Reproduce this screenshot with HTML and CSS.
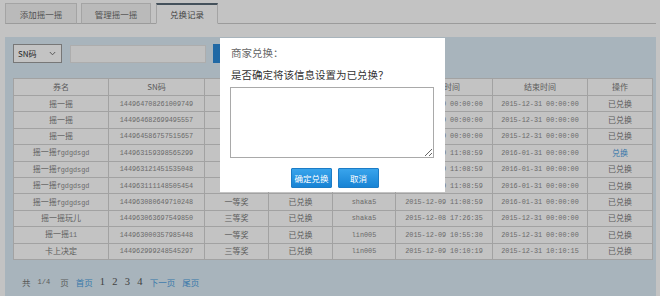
FILE: index.html
```html
<!DOCTYPE html>
<html lang="zh-CN">
<head>
<meta charset="utf-8">
<title>兑换记录</title>
<link rel="stylesheet" href="styles.css">
</head>
<body>
<div class="page">
  <ul class="tabs">
    <li class="tab tab-add">添加摇一摇</li>
    <li class="tab tab-manage">管理摇一摇</li>
    <li class="tab tab-record active">兑换记录</li>
  </ul>
  <div class="panel">
    <div class="toolbar">
      <div class="select"><span>SN码</span><svg class="chev" width="7" height="5" viewBox="0 0 7 5"><path d="M0.8 1 L3.5 3.8 L6.2 1" fill="none" stroke="#666" stroke-width="0.9"/></svg></div>
      <div class="input"></div>
      <button class="search" aria-label="查询"></button>
    </div>
    <table class="grid">
      <colgroup>
        <col style="width:95px"><col style="width:96px"><col style="width:64px"><col style="width:64px"><col style="width:63px"><col style="width:97px"><col style="width:95px"><col style="width:65px">
      </colgroup>
      <thead>
        <tr><th>券名</th><th>SN码</th><th></th><th></th><th></th><th>开始时间</th><th>结束时间</th><th>操作</th></tr>
      </thead>
      <tbody>
        <tr><td>摇一摇</td><td class="en">144964708261009749</td><td></td><td></td><td></td><td class="en">2015-12-09 00:00:00</td><td class="en">2015-12-31 00:00:00</td><td>已兑换</td></tr>
        <tr><td>摇一摇</td><td class="en">144964682699495557</td><td></td><td></td><td></td><td class="en">2015-12-09 00:00:00</td><td class="en">2015-12-31 00:00:00</td><td>已兑换</td></tr>
        <tr><td>摇一摇</td><td class="en">144964586757515657</td><td></td><td></td><td></td><td class="en">2015-12-09 00:00:00</td><td class="en">2015-12-31 00:00:00</td><td>已兑换</td></tr>
        <tr><td>摇一摇<span class="en">fgdgdsgd</span></td><td class="en">144963159398565299</td><td></td><td></td><td></td><td class="en">2015-12-09 11:08:59</td><td class="en">2016-01-31 00:00:00</td><td><span class="link">兑换</span></td></tr>
        <tr><td>摇一摇<span class="en">fgdgdsgd</span></td><td class="en">144963121451535048</td><td></td><td></td><td></td><td class="en">2015-12-09 11:08:59</td><td class="en">2016-01-31 00:00:00</td><td>已兑换</td></tr>
        <tr><td>摇一摇<span class="en">fgdgdsgd</span></td><td class="en">144963111148505454</td><td></td><td></td><td></td><td class="en">2015-12-09 11:08:59</td><td class="en">2016-01-31 00:00:00</td><td>已兑换</td></tr>
        <tr><td>摇一摇<span class="en">fgdgdsgd</span></td><td class="en">144963080649710248</td><td>一等奖</td><td>已兑换</td><td class="en">shaka5</td><td class="en">2015-12-09 11:08:59</td><td class="en">2016-01-31 00:00:00</td><td>已兑换</td></tr>
        <tr><td>摇一摇玩儿</td><td class="en">144963063697549850</td><td>三等奖</td><td>已兑换</td><td class="en">shaka5</td><td class="en">2015-12-08 17:26:35</td><td class="en">2015-12-31 00:00:00</td><td>已兑换</td></tr>
        <tr><td>摇一摇<span class="en">11</span></td><td class="en">144963000357985448</td><td>一等奖</td><td>已兑换</td><td class="en">lin005</td><td class="en">2015-12-09 10:55:30</td><td class="en">2015-12-31 00:00:00</td><td>已兑换</td></tr>
        <tr><td>卡上决定</td><td class="en">144962999248545297</td><td>三等奖</td><td>已兑换</td><td class="en">lin005</td><td class="en">2015-12-09 10:10:19</td><td class="en">2015-12-31 10:10:15</td><td>已兑换</td></tr>
      </tbody>
    </table>
    <div class="pager">
      <span>共</span><span class="en">1/4</span><span>页</span><span class="link">首页</span><span class="num">1</span><span class="num">2</span><span class="num">3</span><span class="num">4</span><span class="link">下一页</span><span class="link">尾页</span>
    </div>
  </div>
</div>
<div class="mask"></div>
<div class="dialog">
  <div class="dialog-title">商家兑换：</div>
  <div class="dialog-text">是否确定将该信息设置为已兑换？</div>
  <textarea class="dialog-note"></textarea>
  <div class="dialog-actions">
    <button class="btn">确定兑换</button>
    <button class="btn">取消</button>
  </div>
</div>
</body>
</html>
```
FILE: styles.css
```css
html, body {
  margin: 0;
  padding: 0;
}
body {
  width: 660px;
  height: 296px;
  overflow: hidden;
  background: #ffffff;
  font-family: "Noto Sans CJK SC", "Noto Sans", sans-serif;
  position: relative;
}
.page {
  box-sizing: border-box;
  height: 296px;
  padding: 3px 4px 0 5px;
  display: flex;
  flex-direction: column;
}
.tabs {
  list-style: none;
  margin: 0;
  padding: 0;
  display: flex;
  height: 20px;
  border-bottom: 1px solid #cbcbcb;
}
.tab {
  box-sizing: border-box;
  height: 21px;
  margin-bottom: -1px;
  border: 1px solid #d7d7d7;
  border-bottom-color: #cbcbcb;
  background: #f4f4f4;
  color: #6a6a6a;
  font-size: 8.5px;
  display: flex;
  align-items: center;
  justify-content: center;
}
.tab-add { width: 72px; }
.tab-manage { width: 70px; margin-left: 4px; }
.tab-record { width: 62px; margin-left: 5px; }
.tab.active {
  background: #ffffff;
  border-top: 2px solid #5a6b78;
  border-bottom-color: #ffffff;
  color: #5a5a5a;
}
.panel {
  flex: 1;
  margin-top: 13px;
  background: #dcecf6;
  padding: 7px 4px 0 8px;
}
.toolbar {
  display: flex;
  align-items: center;
  height: 19px;
}
.select {
  box-sizing: border-box;
  width: 49px;
  height: 19px;
  border: 1px solid #9c9c9c;
  background: #ffffff;
  display: flex;
  align-items: center;
  justify-content: space-between;
  padding: 0 5px 0 4px;
  font-size: 8px;
  color: #333;
}
.input {
  box-sizing: border-box;
  margin-left: 8px;
  width: 136px;
  height: 18px;
  border: 1px solid #e2e2e2;
  background: #fbfbfb;
}
.search {
  margin-left: 7px;
  width: 42px;
  height: 19px;
  border: 0;
  background: #2b8ad8;
}
.grid {
  margin-top: 15px;
  width: 639px;
  table-layout: fixed;
  border-collapse: collapse;
  background: #ffffff;
  color: #7a7a7a;
  font-size: 8px;
}
.grid th, .grid td {
  border: 1px solid #d4d4d4;
  padding: 0;
  text-align: center;
  white-space: nowrap;
  overflow: hidden;
  font-weight: normal;
  line-height: 10px;
}
.grid th { height: 16px; }
.grid td { height: 15.4px; }
.en {
  font-family: "Liberation Mono", monospace;
  font-size: 6.8px;
  color: #8c8c8c;
}
.link { color: #4a9de0; }
.pager {
  margin-top: 16px;
  margin-left: 9px;
  display: flex;
  align-items: center;
  gap: 7px;
  height: 12px;
  font-size: 8.5px;
  color: #777;
}
.pager .en { font-size: 7px; margin: 0 3px 0 0; color: #777; }
.pager .num {
  font-family: "Liberation Serif", serif;
  font-size: 10.5px;
  color: #555;
  width: 5.5px;
}
.mask {
  position: absolute;
  inset: 0;
  background: rgba(0, 0, 0, 0.235);
}
.dialog {
  position: absolute;
  left: 220px;
  top: 38px;
  width: 225px;
  height: 154px;
  box-sizing: border-box;
  background: #ffffff;
  padding: 8px 0 0 10px;
}
.dialog-title {
  font-size: 10.5px;
  line-height: 14px;
  color: #666;
  padding-left: 1px;
}
.dialog-text {
  margin-top: 8px;
  font-size: 10.5px;
  line-height: 14px;
  color: #333;
  padding-left: 1px;
}
.dialog-note {
  display: block;
  box-sizing: border-box;
  margin: 5px 0 0 0;
  width: 204px;
  height: 71px;
  border: 1px solid #a9a9a9;
  padding: 2px;
  background: #fff;
}
.dialog-actions {
  display: flex;
  gap: 6px;
  margin-top: 10px;
  padding-left: 61px;
}
.btn {
  box-sizing: border-box;
  width: 41px;
  height: 20px;
  border: 1px solid #1c7cc6;
  border-radius: 1px;
  background: linear-gradient(#39a4ec, #1783d4);
  color: #fff;
  font-size: 8.5px;
  font-family: inherit;
  padding: 0;
}
```
